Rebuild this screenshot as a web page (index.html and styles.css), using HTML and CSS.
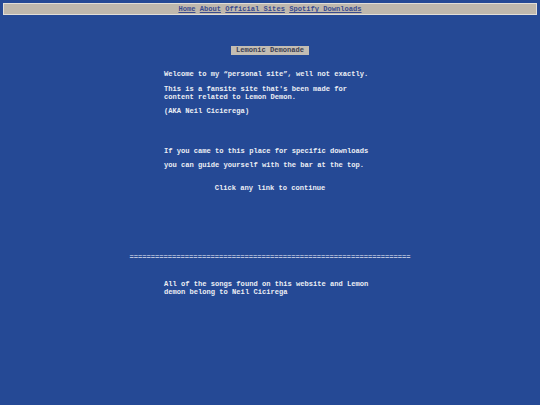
FILE: index.html
```html
<!DOCTYPE html>
<html>
<head>
<meta charset="utf-8">
<link rel="stylesheet" href="styles.css">
</head>
<body>
<nav class="nav">
  <a href="#">Home</a> <a href="#">About</a> <a href="#">Official Sites</a> <a href="#">Spotify Downloads</a>
</nav>
<main class="main">
  <div class="title-row"><span class="title">Lemonic Demonade</span></div>
  <p class="p welcome">Welcome to my “personal site”, well not exactly.</p>
  <p class="p fansite">This is a fansite site that's been made for content related to Lemon Demon.</p>
  <p class="p aka">(AKA Neil Cicierega)</p>
  <p class="p came">If you came to this place for specific downloads</p>
  <p class="p guide">you can guide yourself with the bar at the top.</p>
  <p class="p click">Click any link to continue</p>
</main>
<div class="rule">==================================================================</div>
<p class="p footer">All of the songs found on this website and Lemon demon belong to Neil Cicirega</p>
</body>
</html>
```
FILE: styles.css
```css
html, body {
  margin: 0;
  padding: 0;
}
body {
  background: #254995;
  color: #eceef4;
  font-family: "Liberation Mono", "DejaVu Sans Mono", monospace;
  font-size: 7.1px;
  font-weight: bold;
  line-height: 8px;
  height: 405px;
  overflow: hidden;
}
.nav {
  margin: 3px 3px 0 3px;
  height: 10px;
  line-height: 10px;
  background: #bfb8ad;
  border: 1px solid #e2ded8;
  text-align: center;
}
.nav a {
  color: #3a4c8e;
  text-decoration: underline;
}
.main {
  width: 212px;
  margin: 0 auto;
}
.title-row {
  margin-top: 31px;
  text-align: center;
  height: 9px;
}
.title {
  display: inline-block;
  background: #c3bdb3;
  color: #3b3d52;
  padding: 0 5px;
  height: 9px;
  line-height: 9px;
}
.p {
  margin: 0;
}
.welcome { margin-top: 15px; }
.fansite { margin-top: 7px; }
.aka { margin-top: 6px; }
.came { margin-top: 32px; }
.guide { margin-top: 6px; }
.click { margin-top: 15px; text-align: center; }
.rule {
  margin-top: 61px;
  text-align: center;
  color: #b9c2dc;
}
.footer {
  width: 212px;
  margin: 19px auto 0 auto;
}
```
